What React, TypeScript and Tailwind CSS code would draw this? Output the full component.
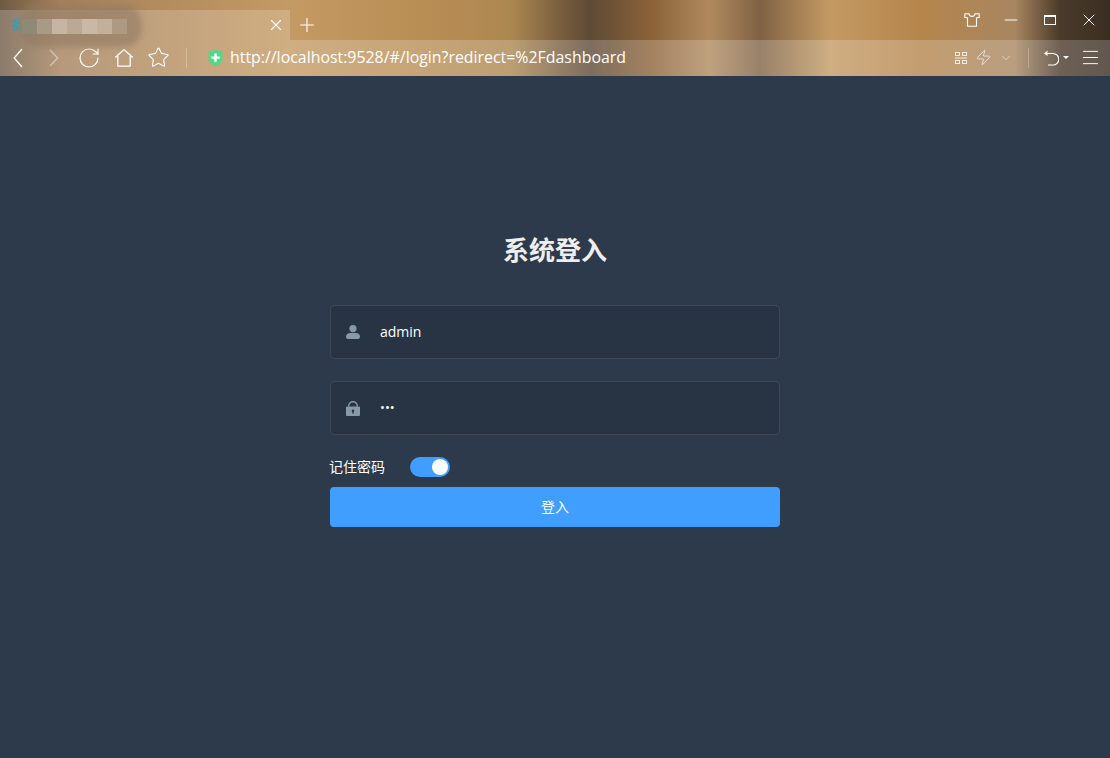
import { ChevronDown, Menu, Minus, Plus, RotateCw, Star, X, Zap } from "lucide-react"

const cjk = "font-['Noto_Sans','Noto_Sans_CJK_SC',sans-serif]"

function TitleBlur() {
    return (
        <div className="absolute left-[20px] top-[5px] h-[42px] w-[122px] rounded-[18px] bg-[#8f7a62]/60 blur-[3px]" />
    )
}

function TitlePixels() {
    return (
        <div className="absolute left-[22px] top-[19px] flex h-[15px] w-[105px]">
            <div className="h-full w-[15px] bg-[#8d8a78]" />
            <div className="h-full w-[15px] bg-[#a99a86]" />
            <div className="h-full w-[15px] bg-[#c6b5a2]" />
            <div className="h-full w-[15px] bg-[#bba993]" />
            <div className="h-full w-[15px] bg-[#c9b8a4]" />
            <div className="h-full w-[15px] bg-[#c2b09b]" />
            <div className="h-full w-[15px] bg-[#ae9a83]" />
        </div>
    )
}

function TabLogo() {
    return (
        <svg className="absolute left-[11px] top-[17px]" width="9" height="16" viewBox="0 0 9 16" fill="none" stroke="#2f9fc0" strokeWidth="1.4">
            <path d="M8 1 2 4l6 2" />
            <path d="M8 6 2 9l6 2" />
            <path d="M8 11l-6 3" />
        </svg>
    )
}

function Shirt() {
    return (
        <svg width="16" height="14" viewBox="0 0 16 14" fill="none" stroke="white" strokeWidth="1.1">
            <path d="M5 .8H1L.7 4.4l2.8.5v8.3h9V4.9l2.8-.5L15 .8h-4C10.6 2.6 9.5 3.4 8 3.4S5.4 2.6 5 .8Z" />
        </svg>
    )
}

function HomeIcon() {
    return (
        <svg width="20" height="20" viewBox="0 0 20 20" fill="none" stroke="white" strokeWidth="1.3">
            <path d="M1.2 9.6 10 1.6l8.8 8M3.8 8v10.2h12.4V8" />
        </svg>
    )
}

function BackArrow() {
    return (
        <svg width="10" height="20" viewBox="0 0 10 20" fill="none" stroke="white" strokeWidth="1.3">
            <path d="M9 1 1.2 10 9 19" />
        </svg>
    )
}

function ForwardArrow() {
    return (
        <svg width="10" height="18" viewBox="0 0 10 18" fill="none" stroke="white" strokeOpacity=".45" strokeWidth="1.3">
            <path d="M1 1l7.8 8L1 17" />
        </svg>
    )
}

function Shield() {
    return (
        <svg width="15" height="16" viewBox="0 0 15 16">
            <path d="M.5 1.5 7.5 0l7 1.5V8c0 4-3.500 6.800-7 8-3.500-1.200-7-4-7-8Z" fill="#4fd98a" />
            <path d="M6.300 3.500h2.400v3h3v2.300h-3v3H6.300v-3h-3V6.500h3Z" fill="white" />
        </svg>
    )
}

function QrIcon() {
    return (
        <svg width="12" height="12" viewBox="0 0 12 12" fill="none" stroke="white" strokeOpacity=".8">
            <rect x=".5" y=".5" width="4" height="3" />
            <rect x="7.500" y=".5" width="4" height="3" />
            <rect x=".5" y="8.500" width="4" height="3" />
            <rect x="7.500" y="8.500" width="4" height="3" />
            <path d="M0 6h12" />
        </svg>
    )
}

function UndoIcon() {
    return (
        <svg width="16" height="16" viewBox="0 0 16 16" fill="none" stroke="white" strokeWidth="1.2">
            <path d="M2 3.500h8a5.700 5.700 0 0 1 0 11.500H5" />
            <path d="M4.500 .5 1 3.500l3.500 2.500" fill="white" stroke="none" />
        </svg>
    )
}

function UserIcon() {
    return (
        <svg width="14" height="14" viewBox="0 0 14 14" fill="#889aa4">
            <circle cx="7" cy="3.600" r="3.600" />
            <path d="M0 11.500C0 9.300 2 8 4 8h6c2 0 4 1.300 4 3.500S13 14 11.500 14h-9C1 14 0 13.500 0 11.500Z" />
        </svg>
    )
}

function LockIcon() {
    return (
        <svg width="14" height="15" viewBox="0 0 14 15" fill="#889aa4">
            <path d="M2 5.500V5a5 5 0 0 1 10 0v.5h-1.400V5a3.600 3.600 0 0 0-7.200 0v.5Z" />
            <path d="M1 5.500h12a1 1 0 0 1 1 1V14a1 1 0 0 1-1 1H1a1 1 0 0 1-1-1V6.500a1 1 0 0 1 1-1Zm6 3a1.300 1.300 0 0 0-.7 2.400v1.600h1.400v-1.600A1.300 1.300 0 0 0 7 8.500Z" fillRule="evenodd" />
        </svg>
    )
}

function BrowserChrome() {
    return (
        <div className="relative h-[76px] w-full overflow-hidden bg-[linear-gradient(90deg,#6e5a45_0,#a5805a_60px,#c49a63_290px,#b98e55_420px,#ad8750_510px,#7a5f40_560px,#5e4a35_590px,#8b6238_650px,#b08a5e_710px,#7f6244_760px,#c49a63_830px,#b5854c_920px,#a88660_1015px,#4a3a2a_1060px,#3a2e22_1110px)]">
            <div className="flex h-10 items-end">
                <div className="relative h-[30px] w-[290px] bg-white/20">
                    <div className="absolute right-[5px] top-[6px] text-white">
                        <X size={18} strokeWidth={1.5} />
                    </div>
                </div>
                <div className="mb-[4px] ml-[6px] text-white">
                    <Plus size={22} strokeWidth={1.2} />
                </div>
                <div className="ml-auto mb-[10px] flex items-center">
                    <div className="mr-[21px]"><Shirt /></div>
                    <div className="mr-[23px] text-white"><Minus size={20} strokeWidth={1.2} /></div>
                    <div className="mr-[23px] h-[10px] w-[12px] border border-t-2 border-white" />
                    <div className="mr-[11px] text-white"><X size={20} strokeWidth={1.2} /></div>
                </div>
            </div>
            <div className="flex h-9 items-center bg-white/20 pb-[1px]">
                <div className="ml-[13px]"><BackArrow /></div>
                <div className="ml-[26px]"><ForwardArrow /></div>
                <div className="ml-[18px] text-white"><RotateCw size={24} strokeWidth={1.2} /></div>
                <div className="ml-[13px]"><HomeIcon /></div>
                <div className="ml-[13px] text-white"><Star size={23} strokeWidth={1.1} /></div>
                <div className="ml-[16px] h-5 w-px bg-white/25" />
                <div className="ml-[21px]"><Shield /></div>
                <div className="ml-[7px] font-['Open_Sans',sans-serif] text-[15.9px] text-white">http://localhost:9528/#/login?redirect=%2Fdashboard</div>
                <div className="ml-auto flex items-center">
                    <QrIcon />
                    <div className="ml-[8px] text-white/70"><Zap size={17} strokeWidth={1.3} /></div>
                    <div className="ml-[7px] text-white/60"><ChevronDown size={14} strokeWidth={1.5} /></div>
                    <div className="ml-[15px] h-5 w-px bg-white/25" />
                    <div className="ml-[14px]"><UndoIcon /></div>
                    <div className="ml-[4px] h-0 w-0 border-x-[3px] border-t-[3px] border-x-transparent border-t-white" />
                    <div className="ml-[11px] text-white"><Menu size={21} strokeWidth={1.1} /></div>
                    <div className="w-[9px]" />
                </div>
            </div>
            <TitleBlur />
            <TitlePixels />
            <TabLogo />
        </div>
    )
}

function Field({ icon, value, small }: { icon: React.ReactNode, value: string, small?: boolean }) {
    return (
        <div className="flex h-[54px] items-center rounded-[5px] border border-white/10 bg-[#283443]">
            <div className="ml-[15px] flex w-[14px] justify-center">{icon}</div>
            <span className={`ml-[20px] font-['Open_Sans',sans-serif] text-white ${small ? "text-[13px]" : "mb-[2px] text-[14px]"}`}>{value}</span>
        </div>
    )
}

export default function App() {
    return (
        <div className="flex h-[758px] w-[1110px] flex-col overflow-hidden bg-[#2d3a4b]">
            <BrowserChrome />
            <div className="mx-auto flex w-[450px] flex-col pt-[156px]">
                <h3 className={`${cjk} text-center text-[26px] leading-[36px] font-bold text-[#eeeeee]`}>系统登入</h3>
                <div className="mt-[37px]">
                    <Field icon={<UserIcon />} value="admin" />
                </div>
                <div className="mt-[22px]">
                    <Field icon={<LockIcon />} value="•••" small />
                </div>
                <div className="mt-[22px] flex h-5 items-center">
                    <span className={`${cjk} -ml-px mb-[2px] w-[81px] text-[14px] text-white`}>记住密码</span>
                    <div className="flex h-5 w-10 items-center justify-end rounded-full bg-[#409eff] pr-[2px]">
                        <div className="h-4 w-4 rounded-full bg-white" />
                    </div>
                </div>
                <button className={`${cjk} mt-[10px] h-10 rounded-[4px] bg-[#409eff] pb-[2px] text-[14px] text-white`}>登入</button>
            </div>
        </div>
    )
}
